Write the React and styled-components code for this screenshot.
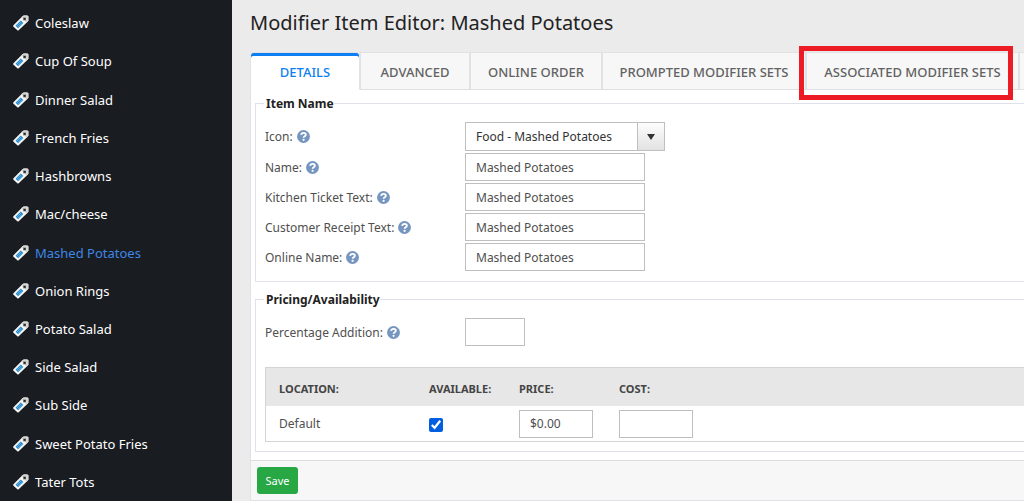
import styled, { createGlobalStyle } from 'styled-components';

const items = [
  'Coleslaw',
  'Cup Of Soup',
  'Dinner Salad',
  'French Fries',
  'Hashbrowns',
  'Mac/cheese',
  'Mashed Potatoes',
  'Onion Rings',
  'Potato Salad',
  'Side Salad',
  'Sub Side',
  'Sweet Potato Fries',
  'Tater Tots',
];

const tabs = [
  { label: 'Details', active: true },
  { label: 'Advanced' },
  { label: 'Online Order' },
  { label: 'Prompted Modifier Sets' },
  { label: 'Associated Modifier Sets', marked: true },
];

const nameFields = [
  { id: 'name', label: 'Name:' },
  { id: 'kitchen', label: 'Kitchen Ticket Text:' },
  { id: 'receipt', label: 'Customer Receipt Text:' },
  { id: 'online', label: 'Online Name:' },
];

export default function App() {
  return (
    <>
      <GlobalStyle />
      <StyledPage>
        <StyledSidebar>
          <StyledList>
            {items.map((item) => (
              <StyledItem key={item}>
                <StyledItemLink href="#" $active={item === 'Mashed Potatoes'}>
                  <TagIcon />
                  {item}
                </StyledItemLink>
              </StyledItem>
            ))}
          </StyledList>
        </StyledSidebar>

        <StyledMain>
          <StyledTitle>Modifier Item Editor: Mashed Potatoes</StyledTitle>
          <StyledTabs>
            {tabs.map((tab) => (
              <StyledTab key={tab.label} type="button" $active={tab.active} $marked={tab.marked}>
                {tab.label}
              </StyledTab>
            ))}
            <StyledTabRest />
          </StyledTabs>

          <StyledPanel>
            <StyledFieldset>
              <legend>Item Name</legend>
              <StyledRow>
                <StyledLabel htmlFor="icon">
                  Icon: <HelpIcon />
                </StyledLabel>
                <StyledSelectBox>
                  <select id="icon" defaultValue="mashed">
                    <option value="mashed">Food - Mashed Potatoes</option>
                  </select>
                </StyledSelectBox>
              </StyledRow>
              {nameFields.map((field) => (
                <StyledRow key={field.id}>
                  <StyledLabel htmlFor={field.id}>
                    {field.label} <HelpIcon />
                  </StyledLabel>
                  <StyledInput id={field.id} $width={180} defaultValue="Mashed Potatoes" />
                </StyledRow>
              ))}
            </StyledFieldset>

            <StyledFieldset>
              <legend>Pricing/Availability</legend>
              <StyledRow>
                <StyledLabel htmlFor="percentage">
                  Percentage Addition: <HelpIcon />
                </StyledLabel>
                <StyledInput id="percentage" $width={60} />
              </StyledRow>
              <StyledTable>
                <colgroup>
                  <StyledCol $width={163} />
                  <StyledCol $width={90} />
                  <StyledCol $width={100} />
                  <col />
                </colgroup>
                <thead>
                  <tr>
                    <th>Location:</th>
                    <th>Available:</th>
                    <th>Price:</th>
                    <th>Cost:</th>
                  </tr>
                </thead>
                <tbody>
                  <tr>
                    <td>Default</td>
                    <td>
                      <StyledCheckbox type="checkbox" aria-label="Available" defaultChecked />
                    </td>
                    <td>
                      <StyledInput $width={74} aria-label="Price" defaultValue="$0.00" />
                    </td>
                    <td>
                      <StyledInput $width={74} aria-label="Cost" />
                    </td>
                  </tr>
                </tbody>
              </StyledTable>
            </StyledFieldset>

            <StyledFooter>
              <StyledSave type="button">Save</StyledSave>
            </StyledFooter>
          </StyledPanel>
        </StyledMain>
      </StyledPage>
    </>
  );
}

function TagIcon() {
  return (
    <svg width="16" height="16" viewBox="0 0 16 16" aria-hidden="true">
      <path d="M0.2 10.6 9.2 1.4 10.6 0.6H14.4L15.4 1.6V5.4L14.6 6.8 5.4 15.6H4.6L0.2 11.4Z" fill="#f6f6f4" />
      <path d="M8.4 2.2 10.6 0.6H14.4L15.4 1.6V5.4L13.6 7.7Z" fill="#d5d5d3" />
      <rect x="10" y="2.4" width="3" height="3" fill="#8a8a88" />
      <rect x="10.8" y="3" width="1.8" height="1.8" fill="#222" />
      <path d="M2.6 10.8 7.8 5.6 10.3 8.1 5.1 13.3Z" fill="#2488cb" />
      <path d="M4 11 8 7M5.2 12.1 9.2 8.1" stroke="#7cc4ee" strokeWidth="0.7" />
    </svg>
  );
}

function HelpIcon() {
  return (
    <svg width="13" height="13" viewBox="0 0 512 512" aria-hidden="true">
      <circle cx="256" cy="256" r="254" fill="#7696c0" />
      <path
        d="M164 196c8-52 44-80 92-80 54 0 92 30 92 74 0 62-86 58-86 118"
        fill="none"
        stroke="#fff"
        strokeWidth="72"
      />
      <circle cx="260" cy="388" r="44" fill="#fff" />
    </svg>
  );
}

const GlobalStyle = createGlobalStyle`
  * {
    box-sizing: border-box;
  }

  body {
    margin: 0;
    background: #ebebeb;
    color: #4f4f4f;
    font-family: "Noto Sans", "Open Sans", sans-serif;
    font-size: 12px;
  }

  button,
  input,
  select {
    font: inherit;
  }
`;

const StyledPage = styled.div`
  display: grid;
  grid-template-columns: 232px minmax(0, 1fr);
  min-height: 100vh;
`;

const StyledSidebar = styled.nav`
  display: flex;
  padding-top: 4px;
  background: #191c21;
  font-size: 13px;
`;

const StyledList = styled.ul`
  display: flex;
  flex: 1;
  flex-direction: column;
  margin: 0;
  padding: 0;
  list-style: none;
`;

const StyledItem = styled.li`
  display: flex;
  flex: 1;
`;

const StyledItemLink = styled.a`
  display: flex;
  flex: 1;
  align-items: center;
  gap: 6px;
  padding-left: 13px;
  color: ${(props) => (props.$active ? '#3f87e5' : '#fff')};
  text-decoration: none;
`;

const StyledMain = styled.main`
  padding-left: 18px;
  overflow: hidden;
`;

const StyledTitle = styled.h1`
  margin: 0;
  padding: 8px 0 14px;
  color: #222;
  font-size: 20px;
  font-weight: 400;
  line-height: 30px;
`;

const StyledTabs = styled.div`
  display: grid;
  grid-template-columns: 110px 110px 132px 204px 213px 1fr;
  height: 38px;
`;

const StyledTab = styled.button`
  position: relative;
  padding: 2px 0 0;
  border: 1px solid #e2e2e2;
  border-bottom-color: ${(props) => (props.$active ? '#fff' : '#dfe0e3')};
  background: ${(props) => (props.$active ? '#fff' : '#f7f7f7')};
  color: ${(props) => (props.$active ? '#0d7ff2' : '#626262')};
  font-size: 13px;
  font-weight: 500;
  text-transform: uppercase;
  white-space: nowrap;

  ${(props) =>
    props.$active &&
    `
    border-radius: 3px 3px 0 0;
    box-shadow: inset 0 3px #0d7ff2;
  `}

  ${(props) =>
    props.$marked &&
    `
    &::after {
      content: '';
      position: absolute;
      inset: -7px 5px -11px -8px;
      border: 5px solid #ed1c24;
    }
  `}
`;

const StyledTabRest = styled.div`
  border: 1px solid #e2e2e2;
  border-right: 0;
  background: #f7f7f7;
`;

const StyledPanel = styled.div`
  padding-top: 5px;
  border-left: 1px solid #dee2e6;
  border-bottom: 1px solid #dee2e6;
  background: #fff;
`;

const StyledFieldset = styled.fieldset`
  min-width: 0;
  margin: 0 0 9px 4px;
  padding: 10px 0 10px 9px;
  border: 1px solid #dfe2e8;
  border-right: 0;

  &:last-of-type {
    margin-bottom: 8px;
    padding-bottom: 9px;
  }

  legend {
    margin-left: -1px;
    padding: 0 0 0 2px;
    color: #222;
    font-weight: 700;
    line-height: 17px;
  }
`;

const StyledRow = styled.div`
  display: flex;
  align-items: center;

  & + & {
    margin-top: 2px;
  }
`;

const StyledLabel = styled.label`
  display: flex;
  align-items: center;
  gap: 4px;
  width: 200px;
`;

const StyledInput = styled.input`
  display: block;
  width: ${(props) => props.$width}px;
  height: 28px;
  padding: 0 10px;
  border: 1px solid #bfbfbf;
  background: #fff;
  color: #4f4f4f;
`;

const StyledSelectBox = styled.div`
  position: relative;
  width: 200px;

  select {
    display: block;
    width: 100%;
    height: 29px;
    padding: 0 38px 0 10px;
    border: 1px solid #bfbfbf;
    border-radius: 0;
    appearance: none;
    background: linear-gradient(#fdfdfd, #e2e2e2) right / 26px 100% no-repeat #fff;
    color: #333;
  }

  &::before {
    content: '';
    position: absolute;
    top: 0;
    bottom: 0;
    right: 27px;
    border-left: 1px solid #bfbfbf;
  }

  &::after {
    content: '';
    position: absolute;
    top: 12px;
    right: 10px;
    border: 4px solid transparent;
    border-top: 6px solid #333;
    border-bottom: 0;
    pointer-events: none;
  }
`;

const StyledTable = styled.table`
  width: 100%;
  margin-top: 21px;
  border: 1px solid #d5d5d5;
  border-right: 0;
  border-spacing: 0;
  table-layout: fixed;

  th,
  td {
    padding: 0;
    text-align: left;
  }

  th {
    height: 38px;
    padding-top: 2px;
    background: #e7e7e7;
    color: #444;
    font-size: 11px;
    font-weight: 700;
    text-transform: uppercase;
  }

  td {
    height: 35px;
  }

  th:first-child,
  td:first-child {
    padding-left: 13px;
  }
`;

const StyledCol = styled.col`
  width: ${(props) => props.$width}px;
`;

const StyledCheckbox = styled.input`
  display: block;
  width: 14px;
  height: 14px;
  margin: 3px 0 0;
  accent-color: #005fe0;
`;

const StyledFooter = styled.footer`
  padding: 6px;
  border-top: 1px solid #dcdcdf;
  background: #f7f7f7;
`;

const StyledSave = styled.button`
  display: block;
  min-width: 41px;
  height: 27px;
  padding: 0 8px;
  border: 0;
  border-radius: 3px;
  background: #28a745;
  color: #fff;
  font-size: 11px;
`;
